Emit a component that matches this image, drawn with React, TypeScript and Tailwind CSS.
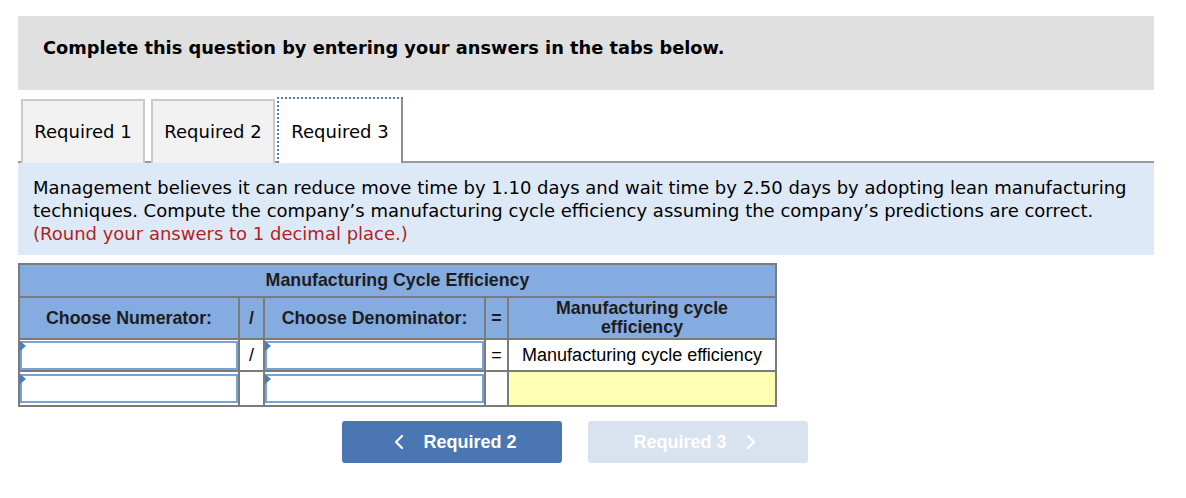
import { ChevronLeft, ChevronRight } from "lucide-react";

const verdana = "font-['DejaVu_Sans',Verdana,sans-serif]";
const arial = "font-['Liberation_Sans',Arial,sans-serif]";

function InputCell() {
  return (
    <td className="p-0 border-2 border-[#7b7b7b] bg-white">
      <div className="relative h-[29px] border-2 border-[#7ba2d6] bg-white">
        <span className="absolute -left-[2px] -top-[2px] w-0 h-0 border-t-[5px] border-b-[5px] border-l-[6px] border-t-transparent border-b-transparent border-l-[#4a7cc0]" />
      </div>
    </td>
  );
}

export default function App() {
  return (
    <div className="w-[1186px] h-[498px] bg-white pt-4 px-[18px]">
      <div className={`${verdana} w-[1136px] h-[74px] bg-[#e0e0e0] flex items-center pl-[25px] pb-[10px]`}>
        <span className="text-[17.8px] font-bold text-black">
          Complete this question by entering your answers in the tabs below.
        </span>
      </div>

      <div className={`${verdana} flex items-end mt-[7px] pl-[3px] h-[66px] border-b-2 border-[#9a9a9a] w-[1136px]`}>
        <div className="w-[124px] h-[64px] mb-[-2px] pb-[2px] bg-[#f2f2f2] border-2 border-b-0 border-[#cacaca] flex items-center justify-center text-[18px] text-black">
          Required 1
        </div>
        <div className="w-[124px] h-[64px] mb-[-2px] pb-[2px] ml-[6px] bg-[#f2f2f2] border-2 border-b-0 border-[#cacaca] flex items-center justify-center text-[18px] text-black">
          Required 2
        </div>
        <div className="w-[126px] h-[66px] mb-[-2px] ml-[2px] bg-white border-t-2 border-l-2 border-dotted border-[#4f7dc4] flex">
          <div className="flex-1 h-full border-r-2 border-solid border-[#8f8f8f] flex items-center justify-center text-[18px] text-black">
            Required 3
          </div>
        </div>
      </div>

      <div className={`${verdana} w-[1136px] h-[92px] bg-[#dee9f7] px-[15px] pt-[13px] text-[18px] leading-[23px] text-black`}>
        <p>
          Management believes it can reduce move time by 1.10 days and wait time by 2.50 days by adopting lean manufacturing
          techniques. Compute the company’s manufacturing cycle efficiency assuming the company’s predictions are correct.
        </p>
        <p className="text-[#b0241c]">(Round your answers to 1 decimal place.)</p>
      </div>

      <table className={`${arial} mt-[8px] border-collapse border-2 border-[#7b7b7b] text-black`}>
        <colgroup>
          <col className="w-[220px]" />
          <col className="w-[25px]" />
          <col className="w-[221px]" />
          <col className="w-[23px]" />
          <col className="w-[268px]" />
        </colgroup>
        <tbody>
          <tr className="h-[33px] bg-[#84ace0]">
            <th colSpan={5} className="border-2 border-[#7b7b7b] text-[17.8px] font-bold text-[#1d1d1d]">
              Manufacturing Cycle Efficiency
            </th>
          </tr>
          <tr className="h-[42px] bg-[#84ace0] text-[17.8px] font-bold text-[#1d1d1d]">
            <th className="border-2 border-[#7b7b7b]">Choose Numerator:</th>
            <th className="border-2 border-[#7b7b7b]">/</th>
            <th className="border-2 border-[#7b7b7b]">Choose Denominator:</th>
            <th className="border-2 border-[#7b7b7b]">=</th>
            <th className="border-2 border-[#7b7b7b] leading-[19px]">
              Manufacturing cycle
              <br />
              efficiency
            </th>
          </tr>
          <tr className="h-[32px] text-[18px]">
            <InputCell />
            <td className="border-2 border-[#7b7b7b] text-center bg-white">/</td>
            <InputCell />
            <td className="border-2 border-[#7b7b7b] text-center bg-white">=</td>
            <td className="border-2 border-[#7b7b7b] text-center bg-white">Manufacturing cycle efficiency</td>
          </tr>
          <tr className="h-[35px] text-[18px]">
            <InputCell />
            <td className="border-2 border-[#7b7b7b] bg-white" />
            <InputCell />
            <td className="border-2 border-[#7b7b7b] bg-white" />
            <td className="border-2 border-[#7b7b7b] bg-[#ffffb4]" />
          </tr>
        </tbody>
      </table>

      <div className={`${arial} flex mt-[14px] ml-[324px] gap-[26px]`}>
        <button className="w-[220px] h-[42px] rounded-[3px] bg-[#4a76b3] flex items-center justify-center gap-[12px] text-white text-[18px] font-bold">
          <ChevronLeft className="w-[24px] h-[24px]" strokeWidth={2.2} />
          Required 2
        </button>
        <button className="w-[220px] h-[42px] rounded-[3px] bg-[#d9e3f0] flex items-center justify-center gap-[12px] text-white text-[18px] font-bold">
          Required 3
          <ChevronRight className="w-[24px] h-[24px]" strokeWidth={2.2} />
        </button>
      </div>
    </div>
  );
}
